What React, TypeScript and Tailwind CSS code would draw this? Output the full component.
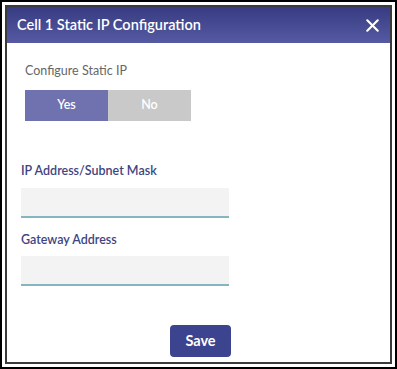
import { X } from 'lucide-react';

const Field = ({ label }: { label: string }) => (
  <div className="flex flex-col">
    <label className="text-[12.5px] font-semibold text-[#3f4482]">{label}</label>
    <input
      className="mt-[7px] h-[30px] w-[208px] border-b-2 border-[#86b4c0] bg-[#f3f3f3] outline-none"
      type="text"
    />
  </div>
);

export default function App() {
  return (
    <div className="h-[369px] w-[397px] border-2 border-black bg-white p-[3px] font-['Lato',sans-serif]">
      <div className="flex h-full flex-col border-2 border-[#3a3a3a]">
        <div className="flex h-[36px] items-center justify-between bg-gradient-to-b from-[#363b82] to-[#565aa2] pl-[10px] pr-[7px]">
          <span className="text-[14.5px] font-semibold text-white">
            Cell 1 Static IP Configuration
          </span>
          <X className="size-[21px] text-white" strokeWidth={2.4} />
        </div>
        <div className="flex flex-1 flex-col px-[14px]">
          <div className="ml-[4px] mt-[19px] text-[12.5px] text-[#666]">
            Configure Static IP
          </div>
          <div className="ml-[4px] mt-[9px] flex h-[31px] w-[166px] text-[12.5px] font-semibold text-white">
            <button className="flex-1 bg-[#6f72ae]">Yes</button>
            <button className="flex-1 bg-[#c9c9c9]">No</button>
          </div>
          <div className="mt-[41px] flex flex-col gap-[13px]">
            <Field label="IP Address/Subnet Mask" />
            <Field label="Gateway Address" />
          </div>
          <div className="mt-[39px] flex justify-center">
            <button className="ml-[4px] h-[32px] w-[61px] rounded-[4px] bg-[#3c448f] text-[14.5px] font-bold text-white">
              Save
            </button>
          </div>
        </div>
      </div>
    </div>
  );
}
